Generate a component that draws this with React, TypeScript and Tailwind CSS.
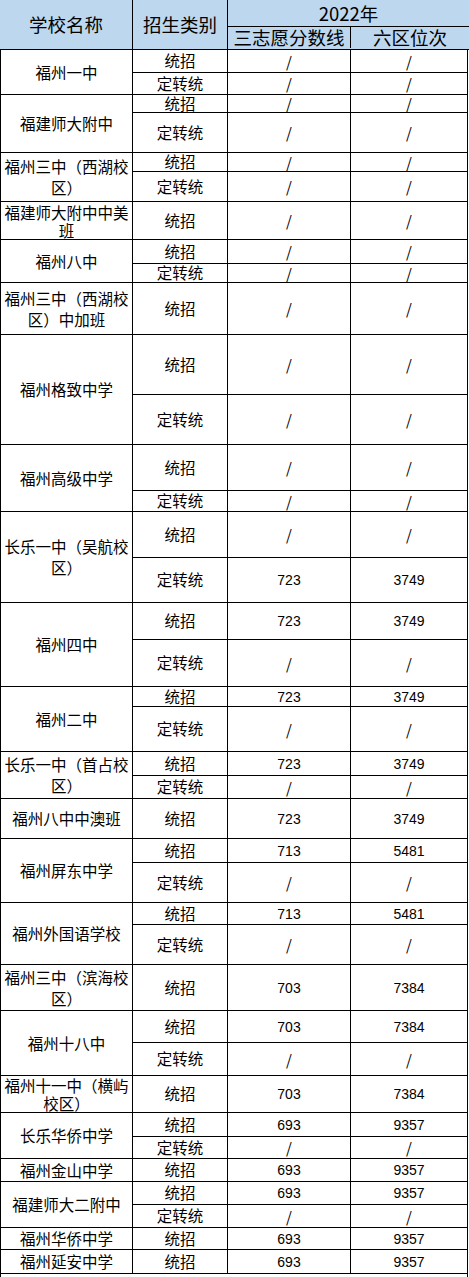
import React from "react";

type SubRow = {
  type: string;
  score: string;
  rank: string;
  h: string;
};

type School = {
  name: string[];
  rows: SubRow[];
  leading?: string;
};

const schools: School[] = [
  {
    name: ["福州一中"],
    rows: [
      { type: "统招", score: "/", rank: "/", h: "h-[22px]" },
      { type: "定转统", score: "/", rank: "/", h: "h-[21px]" },
    ],
  },
  {
    name: ["福建师大附中"],
    rows: [
      { type: "统招", score: "/", rank: "/", h: "h-[17px]" },
      { type: "定转统", score: "/", rank: "/", h: "h-[39px]" },
    ],
  },
  {
    name: ["福州三中（西湖校", "区）"],
    rows: [
      { type: "统招", score: "/", rank: "/", h: "h-[18px]" },
      { type: "定转统", score: "/", rank: "/", h: "h-[29px]" },
    ],
  },
  {
    name: ["福建师大附中中美", "班"],
    leading: "leading-[18px]",
    rows: [{ type: "统招", score: "/", rank: "/", h: "h-[37px]" }],
  },
  {
    name: ["福州八中"],
    rows: [
      { type: "统招", score: "/", rank: "/", h: "h-[23px]" },
      { type: "定转统", score: "/", rank: "/", h: "h-[18px]" },
    ],
  },
  {
    name: ["福州三中（西湖校", "区）中加班"],
    rows: [{ type: "统招", score: "/", rank: "/", h: "h-[51px]" }],
  },
  {
    name: ["福州格致中学"],
    rows: [
      { type: "统招", score: "/", rank: "/", h: "h-[59px]" },
      { type: "定转统", score: "/", rank: "/", h: "h-[49px]" },
    ],
  },
  {
    name: ["福州高级中学"],
    rows: [
      { type: "统招", score: "/", rank: "/", h: "h-[45px]" },
      { type: "定转统", score: "/", rank: "/", h: "h-[20px]" },
    ],
  },
  {
    name: ["长乐一中（吴航校", "区）"],
    rows: [
      { type: "统招", score: "/", rank: "/", h: "h-[45px]" },
      { type: "定转统", score: "723", rank: "3749", h: "h-[44px]" },
    ],
  },
  {
    name: ["福州四中"],
    rows: [
      { type: "统招", score: "723", rank: "3749", h: "h-[36px]" },
      { type: "定转统", score: "/", rank: "/", h: "h-[46px]" },
    ],
  },
  {
    name: ["福州二中"],
    rows: [
      { type: "统招", score: "723", rank: "3749", h: "h-[19px]" },
      { type: "定转统", score: "/", rank: "/", h: "h-[44px]" },
    ],
  },
  {
    name: ["长乐一中（首占校", "区）"],
    rows: [
      { type: "统招", score: "723", rank: "3749", h: "h-[23px]" },
      { type: "定转统", score: "/", rank: "/", h: "h-[22px]" },
    ],
  },
  {
    name: ["福州八中中澳班"],
    rows: [{ type: "统招", score: "723", rank: "3749", h: "h-[39px]" }],
  },
  {
    name: ["福州屏东中学"],
    rows: [
      { type: "统招", score: "713", rank: "5481", h: "h-[23px]" },
      { type: "定转统", score: "/", rank: "/", h: "h-[39px]" },
    ],
  },
  {
    name: ["福州外国语学校"],
    rows: [
      { type: "统招", score: "713", rank: "5481", h: "h-[21px]" },
      { type: "定转统", score: "/", rank: "/", h: "h-[39px]" },
    ],
  },
  {
    name: ["福州三中（滨海校", "区）"],
    rows: [{ type: "统招", score: "703", rank: "7384", h: "h-[45px]" }],
  },
  {
    name: ["福州十八中"],
    rows: [
      { type: "统招", score: "703", rank: "7384", h: "h-[31px]" },
      { type: "定转统", score: "/", rank: "/", h: "h-[32px]" },
    ],
  },
  {
    name: ["福州十一中（横屿", "校区）"],
    leading: "leading-[18px]",
    rows: [{ type: "统招", score: "703", rank: "7384", h: "h-[36px]" }],
  },
  {
    name: ["长乐华侨中学"],
    rows: [
      { type: "统招", score: "693", rank: "9357", h: "h-[23px]" },
      { type: "定转统", score: "/", rank: "/", h: "h-[21px]" },
    ],
  },
  {
    name: ["福州金山中学"],
    rows: [{ type: "统招", score: "693", rank: "9357", h: "h-[22px]" }],
  },
  {
    name: ["福建师大二附中"],
    rows: [
      { type: "统招", score: "693", rank: "9357", h: "h-[22px]" },
      { type: "定转统", score: "/", rank: "/", h: "h-[22px]" },
    ],
  },
  {
    name: ["福州华侨中学"],
    rows: [{ type: "统招", score: "693", rank: "9357", h: "h-[21px]" }],
  },
  {
    name: ["福州延安中学"],
    rows: [{ type: "统招", score: "693", rank: "9357", h: "h-[23px]" }],
  },
];

function TableHeaderRow() {
  return (
    <div className="flex w-full border-b border-black bg-[#bdd7ee] text-[18.5px] text-black">
      <div className="flex h-[49px] w-[133px] items-center justify-center border-r border-black">
        学校名称
      </div>
      <div className="flex w-[95px] items-center justify-center border-r border-black">
        招生类别
      </div>
      <div className="flex flex-1 flex-col">
        <div className="flex h-[27px] items-center justify-center border-b border-black leading-none">
          2022年
        </div>
        <div className="flex h-[21px]">
          <div className="flex w-[123px] items-center justify-center border-r border-black leading-none">
            三志愿分数线
          </div>
          <div className="flex flex-1 items-center justify-center leading-none">
            六区位次
          </div>
        </div>
      </div>
    </div>
  );
}

function ValueCell({ value, className }: { value: string; className: string }) {
  const isNumber = value !== "/";
  return (
    <div
      className={
        className +
        " flex items-center justify-center leading-none " +
        (isNumber ? "text-[14px] font-['Liberation_Sans',sans-serif]" : "text-[15px]")
      }
    >
      {value}
    </div>
  );
}

function SchoolBlock({ school }: { school: School }) {
  return (
    <div className="flex border-b border-l border-r border-black">
      <div
        className={
          "flex w-[132px] flex-col items-center justify-center border-r border-black text-center " +
          (school.leading ?? "leading-[21px]")
        }
      >
        {school.name.map((line, i) => (
          <div key={i} className="whitespace-nowrap">
            {line}
          </div>
        ))}
      </div>
      <div className="flex flex-1 flex-col">
        {school.rows.map((row, i) => (
          <div
            key={i}
            className={
              "box-content flex shrink-0 " + row.h + (i > 0 ? " border-t border-black" : "")
            }
          >
            <div className="flex w-[95px] items-center justify-center border-r border-black leading-none">
              {row.type}
            </div>
            <ValueCell value={row.score} className="w-[123px] border-r border-black" />
            <ValueCell value={row.rank} className="flex-1" />
          </div>
        ))}
      </div>
    </div>
  );
}

export default function App() {
  return (
    <div className="min-h-[1277px] w-[469px] bg-white font-['Noto_Sans_CJK_SC',sans-serif] text-[15.5px] text-black">
      <TableHeaderRow />
      <div className="flex w-[468px] flex-col">
        {schools.map((s, i) => (
          <SchoolBlock key={i} school={s} />
        ))}
        <div className="h-[4px] border-l border-r border-black" />
      </div>
    </div>
  );
}
